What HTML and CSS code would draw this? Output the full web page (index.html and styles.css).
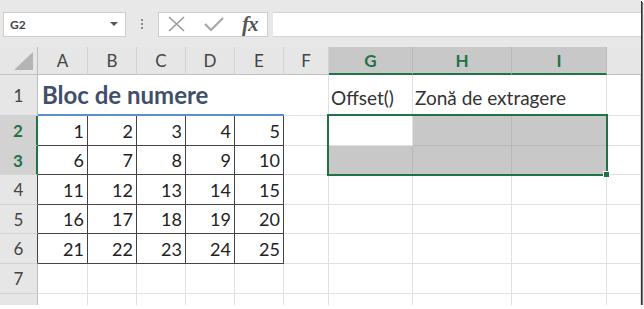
FILE: index.html
```html
<!DOCTYPE html>
<html lang="ro">
<head>
    <meta charset="UTF-8">
    <title>Offset - zonă de extragere</title>
    <link rel="stylesheet" href="styles.css">
</head>
<body>
    <div class="window">
        <div class="toolbar">
            <div class="namebox">
                <span>G2</span>
                <span class="caret"></span>
            </div>
            <div class="grip"><i></i><i></i><i></i></div>
            <div class="fxbox">
                <svg width="20" height="16" viewBox="0 0 20 16"><path d="M2 1 L17 15 M17 1 L2 15" stroke="#9a9a9a" stroke-width="1.6" fill="none"/></svg>
                <svg width="22" height="16" viewBox="0 0 22 16"><path d="M2 8 L8 14 L20 2" stroke="#a8a8a8" stroke-width="2.2" fill="none"/></svg>
                <span class="fx">fx</span>
            </div>
            <div class="formula"></div>
        </div>

        <div class="sheet">
            <!-- header -->
            <div class="ch corner"><span class="tri"></span></div>
            <div class="ch">A</div><div class="ch">B</div><div class="ch">C</div><div class="ch">D</div><div class="ch">E</div><div class="ch">F</div>
            <div class="ch sel">G</div><div class="ch sel">H</div><div class="ch sel">I</div><div class="ch blank"></div>

            <!-- 1 -->
            <div class="rh">1</div>
            <div class="c title">Bloc de numere</div>
            <div class="c"></div>
            <div class="c txt">Offset()</div>
            <div class="c txt wide">Zonă de extragere</div>
            <div class="c"></div>

            <!-- 2 -->
            <div class="rh on">2</div>
            <div class="c d">1</div><div class="c d">2</div><div class="c d">3</div><div class="c d">4</div><div class="c d">5</div>
            <div class="c"></div><div class="c"></div><div class="c fill"></div><div class="c fill"></div><div class="c"></div>

            <!-- 3 -->
            <div class="rh on">3</div>
            <div class="c d">6</div><div class="c d">7</div><div class="c d">8</div><div class="c d">9</div><div class="c d">10</div>
            <div class="c"></div><div class="c fill"></div><div class="c fill"></div><div class="c fill"></div><div class="c"></div>

            <!-- 4 -->
            <div class="rh dk">4</div>
            <div class="c d">11</div><div class="c d">12</div><div class="c d">13</div><div class="c d">14</div><div class="c d">15</div>
            <div class="c"></div><div class="c"></div><div class="c"></div><div class="c"></div><div class="c"></div>

            <!-- 5 -->
            <div class="rh dk">5</div>
            <div class="c d">16</div><div class="c d">17</div><div class="c d">18</div><div class="c d">19</div><div class="c d">20</div>
            <div class="c"></div><div class="c"></div><div class="c"></div><div class="c"></div><div class="c"></div>

            <!-- 6 -->
            <div class="rh dk">6</div>
            <div class="c d">21</div><div class="c d">22</div><div class="c d">23</div><div class="c d">24</div><div class="c d">25</div>
            <div class="c"></div><div class="c"></div><div class="c"></div><div class="c"></div><div class="c"></div>

            <!-- 7 -->
            <div class="rh">7</div>
            <div class="c"></div><div class="c"></div><div class="c"></div><div class="c"></div><div class="c"></div>
            <div class="c"></div><div class="c"></div><div class="c"></div><div class="c"></div><div class="c"></div>

            <!-- 8, only its top edge shows -->
            <div class="rh"></div>
            <div class="c"></div><div class="c"></div><div class="c"></div><div class="c"></div><div class="c"></div>
            <div class="c"></div><div class="c"></div><div class="c"></div><div class="c"></div><div class="c"></div>
        </div>

        <div class="selection"><span class="handle"></span></div>
    </div>
</body>
</html>
```

FILE: styles.css
```css
body {
    margin: 0;
    background: #fff;
    font-family: Lato, "Open Sans", sans-serif;
}
.window {
    position: relative;
    width: 641px;
    height: 305px;
    overflow: hidden;
    background: #fff;
    box-shadow: 1px 1px 0 #333, 2px 2px 1px #777;
}

/* formula bar */
.toolbar {
    height: 47px;
    background: #e8e8e8;
    display: flex;
    align-items: center;
    padding-left: 3px;
    box-sizing: border-box;
    padding-top: 1px;
}
.namebox {
    width: 123px;
    height: 25px;
    box-sizing: border-box;
    background: #fff;
    border: 1px solid #cdcdcd;
    display: flex;
    align-items: center;
    justify-content: space-between;
    padding: 0 7px 0 6px;
    font-size: 12px;
    font-weight: bold;
    color: #444;
}
.caret {
    width: 0;
    height: 0;
    border-left: 4px solid transparent;
    border-right: 4px solid transparent;
    border-top: 4px solid #555;
}
.grip {
    width: 32px;
    display: flex;
    flex-direction: column;
    align-items: center;
    gap: 2px;
}
.grip i {
    width: 2px;
    height: 2px;
    background: #8a8a8a;
}
.fxbox {
    width: 110px;
    height: 25px;
    box-sizing: border-box;
    background: #fff;
    border: 1px solid #cdcdcd;
    display: flex;
    align-items: center;
    padding-left: 8px;
    gap: 16px;
}
.fx {
    font-family: "Liberation Serif", serif;
    font-style: italic;
    font-weight: bold;
    font-size: 21px;
    color: #555;
    letter-spacing: -1px;
    margin-left: 1px;
    line-height: 1;
}
.formula {
    flex: 1;
    height: 25px;
    margin-left: 5px;
    background: #fff;
    border-top: 1px solid #d4d4d4;
    border-bottom: 1px solid #d4d4d4;
    box-sizing: border-box;
}

/* grid */
.sheet {
    display: grid;
    grid-template-columns: 38px 50px 49px 49px 49px 49px 45px 84px 99px 95px 1fr;
    grid-template-rows: 28px 41px 30px 29px 30px 29px 30px 30px 12px;
    font-size: 18px;
}
.sheet > div {
    box-sizing: border-box;
}
.ch {
    background: #e6e6e6;
    border-right: 1px solid #d2d2d2;
    border-bottom: 1px solid #c2c2c2;
    display: flex;
    align-items: center;
    justify-content: center;
    color: #444;
    font-size: 17px;
}
.ch.sel {
    background: #c8c8c8;
    color: #217346;
    font-weight: bold;
    border-right-color: #bababa;
    border-bottom: 2px solid #217346;
}
.ch.blank {
    border-right: none;
}
.corner {
    position: relative;
    border-right-color: #bdbdbd;
}
.tri {
    position: absolute;
    right: 4px;
    bottom: 4px;
    width: 0;
    height: 0;
    border-left: 19px solid transparent;
    border-bottom: 18px solid #b4b4b4;
}
.rh {
    background: #e6e6e6;
    border-right: 1px solid #bdbdbd;
    border-bottom: 1px solid #d2d2d2;
    display: flex;
    align-items: center;
    justify-content: center;
    color: #444;
    font-size: 17px;
}
.rh.on {
    background: #d2d2d2;
    color: #217346;
    font-weight: bold;
    border-right: 2px solid #217346;
}
.rh.dk {
    border-right: 1px solid #444;
}
.c {
    border-right: 1px solid #e0e0e0;
    border-bottom: 1px solid #e0e0e0;
}
.title {
    grid-column: span 5;
    border-right: none;
    border-bottom: 2px solid #5b8fd0;
    color: #3f4f6a;
    font-weight: bold;
    font-size: 24px;
    white-space: nowrap;
    display: flex;
    align-items: flex-end;
    padding: 0 0 5px 4px;
}
.txt {
    color: #333;
    font-size: 19px;
    white-space: nowrap;
    display: flex;
    align-items: flex-end;
    padding: 0 0 6px 2px;
}
.txt.wide {
    grid-column: span 2;
}
.d {
    border-right: 1px solid #444;
    border-bottom: 1px solid #444;
    display: flex;
    align-items: center;
    justify-content: flex-end;
    padding-right: 3px;
    color: #222;
}
.fill {
    background: #c8c8c8;
    border-right-color: #b8b8b8;
    border-bottom-color: #b8b8b8;
}

/* selection overlay */
.selection {
    position: absolute;
    left: 327px;
    top: 114px;
    width: 281px;
    height: 62px;
    box-sizing: border-box;
    border: 2px solid #217346;
}
.handle {
    position: absolute;
    right: -4px;
    bottom: -4px;
    width: 5px;
    height: 5px;
    background: #217346;
    border: 1px solid #fff;
}
```
